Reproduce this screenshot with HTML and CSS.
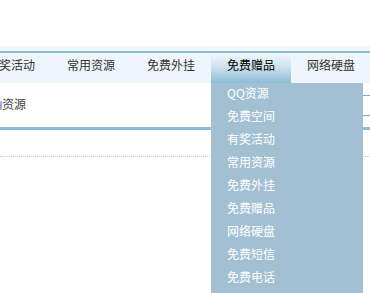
FILE: index.html
```html
<!DOCTYPE html>
<html lang="zh-CN">
<head>
<meta charset="utf-8">
<title>导航</title>
<link rel="stylesheet" href="styles.css">
</head>
<body>
<div class="page">
  <div class="top"></div>
  <div class="strip"></div>
  <ul class="nav">
    <li class="tab">有奖活动</li>
    <li class="tab">常用资源</li>
    <li class="tab">免费外挂</li>
    <li class="tab active">免费赠品
      <ul class="drop">
        <li>QQ资源</li>
        <li>免费空间</li>
        <li>有奖活动</li>
        <li>常用资源</li>
        <li>免费外挂</li>
        <li>免费赠品</li>
        <li>网络硬盘</li>
        <li>免费短信</li>
        <li>免费电话</li>
      </ul>
    </li>
    <li class="tab">网络硬盘</li>
  </ul>
  <div class="row">
    <span class="icon"></span>
    <span class="label">资源</span>
    <span class="box"></span>
  </div>
  <div class="gap"></div>
</div>
</body>
</html>
```
FILE: styles.css
```css
html, body {
  margin: 0;
  padding: 0;
  background: #fff;
}
.page {
  width: 370px;
  height: 293px;
  overflow: hidden;
  font-family: "Noto Sans CJK SC", "Liberation Sans", sans-serif;
  font-size: 12px;
}
.top {
  height: 46px;
}
.strip {
  height: 5px;
  background: #f1f6fc;
}
.nav {
  list-style: none;
  margin: 0 0 0 -29px;
  padding: 0;
  display: flex;
  height: 30px;
  width: 420px;
  border-top: 2px solid #8bbbd6;
  background: #eef5fd;
}
.tab {
  width: 80px;
  height: 30px;
  box-sizing: border-box;
  flex: none;
  line-height: 24px;
  padding-bottom: 6px;
  text-align: center;
  color: #333;
  position: relative;
}
.tab.active {
  color: #000;
  background: linear-gradient(to bottom, #f2f8fc 0%, #cfe2ee 45%, #8dbcd7 100%);
}
.drop {
  list-style: none;
  margin: 0;
  padding: 0 0 10px 0;
  position: absolute;
  top: 30px;
  left: 0;
  width: 152px;
  background: #a3c0d3;
  z-index: 5;
}
.drop li {
  height: 23px;
  box-sizing: border-box;
  line-height: 20px;
  padding: 0 0 3px 16px;
  text-align: left;
  color: #ffffff;
}
.row {
  height: 44px;
  border-bottom: 3px solid #8bbbd6;
  display: flex;
  align-items: center;
}
.icon {
  width: 12px;
  height: 9px;
  margin-left: -10px;
  background: linear-gradient(to bottom, #b9c2f0, #8f9ee0 50%, #e0a6c8);
  flex: none;
}
.label {
  color: #444;
  line-height: 42px;
  padding-bottom: 2px;
}
.box {
  margin-left: auto;
  margin-right: -10px;
  width: 110px;
  height: 19px;
  border-top: 1px solid #7ea7c6;
  border-bottom: 1px solid #7ea7c6;
}
.gap {
  height: 26px;
  border-bottom: 1px dotted #c9c9c9;
}
```
